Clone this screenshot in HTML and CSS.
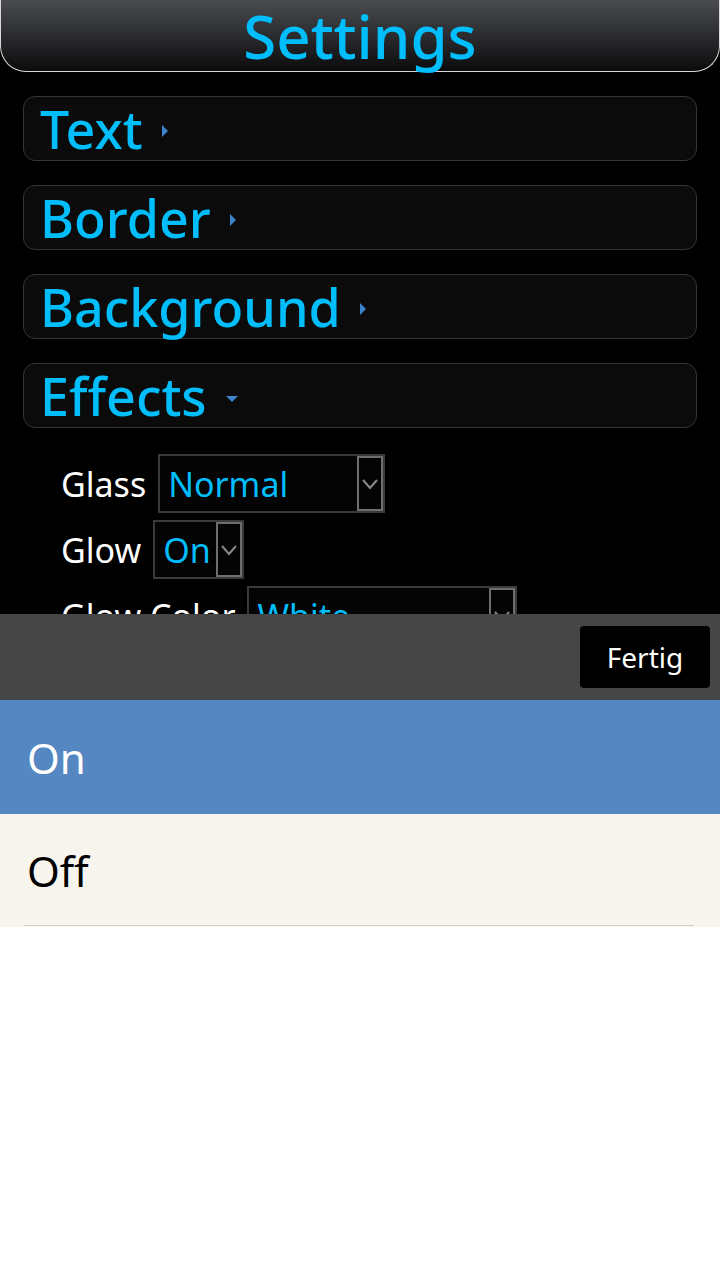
FILE: index.html
```html
<!DOCTYPE html>
<html lang="en">
<head>
    <meta charset="UTF-8">
    <meta name="viewport" content="width=device-width, initial-scale=1.0">
    <title>Settings</title>
    <link rel="stylesheet" href="styles.css">
</head>
<body>

    <div id="app">
        <header class="title-bar">
            <h1>Settings</h1>
        </header>

        <div class="section">
            <span class="section-name">Text</span>
            <span class="arrow arrow-right"></span>
        </div>
        <div class="section">
            <span class="section-name">Border</span>
            <span class="arrow arrow-right"></span>
        </div>
        <div class="section">
            <span class="section-name">Background</span>
            <span class="arrow arrow-right"></span>
        </div>
        <div class="section">
            <span class="section-name">Effects</span>
            <span class="arrow arrow-down"></span>
        </div>

        <div class="options">
            <div class="option-row">
                <span class="option-label">Glass</span>
                <div class="select select-glass">
                    <span class="select-value">Normal</span>
                    <span class="select-btn"><svg width="18" height="12" viewBox="0 0 18 12"><path d="M2 2 L9 10 L16 2" fill="none" stroke="#8a8a8a" stroke-width="2"/></svg></span>
                </div>
            </div>
            <div class="option-row">
                <span class="option-label">Glow</span>
                <div class="select select-glow">
                    <span class="select-value">On</span>
                    <span class="select-btn"><svg width="18" height="12" viewBox="0 0 18 12"><path d="M2 2 L9 10 L16 2" fill="none" stroke="#8a8a8a" stroke-width="2"/></svg></span>
                </div>
            </div>
            <div class="option-row">
                <span class="option-label">Glow Color</span>
                <div class="select select-color">
                    <span class="select-value">White</span>
                    <span class="select-btn"><svg width="18" height="12" viewBox="0 0 18 12"><path d="M2 2 L9 10 L16 2" fill="none" stroke="#8a8a8a" stroke-width="2"/></svg></span>
                </div>
            </div>
        </div>
    </div>

    <div id="picker">
        <div class="picker-bar">
            <button class="done-btn">Fertig</button>
        </div>
        <ul class="picker-list">
            <li class="picker-item selected">On</li>
            <li class="picker-item last">Off</li>
        </ul>
    </div>

</body>
</html>
```

FILE: styles.css
```css
body {
    margin: 0;
    padding: 0;
    background-color: #fff;
    font-family: "Noto Sans", "Open Sans", sans-serif;
}
#app {
    background-color: #000;
    height: 614px;
    overflow: hidden;
}
.title-bar {
    height: 72px;
    box-sizing: border-box;
    background: linear-gradient(to bottom, #4a4c51, #0b0b0c);
    border: 1px solid #d8d8d8;
    border-top: none;
    border-radius: 0 0 26px 26px;
    display: flex;
    justify-content: center;
    align-items: flex-start;
}
.title-bar h1 {
    margin: 0;
    color: #00bdfb;
    font-size: 60px;
    font-weight: 500;
    line-height: 76px;
    margin-top: -2px;
}
.section {
    margin: 24px 23px 0 23px;
    height: 65px;
    box-sizing: border-box;
    background-color: #0b0b0b;
    border: 1px solid #353535;
    border-radius: 12px;
    display: flex;
    align-items: center;
    padding-left: 16px;
    gap: 19px;
}
.section-name {
    color: #00bdfb;
    font-size: 52px;
    font-weight: 500;
    line-height: 60px;
    margin-top: 0;
}
.arrow {
    width: 0;
    height: 0;
    margin-top: 4px;
}
.arrow-right {
    border-top: 6px solid transparent;
    border-bottom: 6px solid transparent;
    border-left: 6px solid #3b84cc;
}
.arrow-down {
    border-left: 6px solid transparent;
    border-right: 6px solid transparent;
    border-top: 6px solid #3b84cc;
    margin-top: 6px;
}
.options {
    margin-top: 26px;
    padding-left: 61px;
    display: flex;
    flex-direction: column;
    gap: 7px;
}
.option-row {
    display: flex;
    align-items: center;
    gap: 12px;
}
.option-label {
    color: #fff;
    font-size: 34px;
}
.select {
    height: 59px;
    box-sizing: border-box;
    border: 2px solid #3a3a3a;
    background-color: #040404;
    display: flex;
    align-items: center;
    justify-content: space-between;
    padding-left: 8px;
}
.select-glass {
    width: 227px;
}
.select-glow {
    width: 91px;
}
.select-color {
    width: 270px;
}
.select-value {
    color: #00bdfb;
    font-size: 34px;
}
.select-btn {
    width: 26px;
    height: 55px;
    box-sizing: border-box;
    border: 2px solid #6e6e6e;
    display: flex;
    align-items: center;
    justify-content: center;
    flex-shrink: 0;
}
.select-btn svg {
    width: 18px;
    height: 12px;
    flex-shrink: 0;
}
.picker-bar {
    height: 86px;
    background-color: #464646;
    display: flex;
    justify-content: flex-end;
    align-items: center;
    padding-right: 10px;
}
.done-btn {
    width: 130px;
    height: 62px;
    background-color: #000;
    color: #fff;
    border: none;
    border-radius: 4px;
    font-family: "Noto Sans", "Open Sans", sans-serif;
    font-size: 28px;
    cursor: pointer;
}
.picker-list {
    list-style: none;
    margin: 0;
    padding: 0;
}
.picker-item {
    height: 113px;
    box-sizing: border-box;
    background-color: #f8f5ef;
    color: #000;
    font-size: 42px;
    padding-left: 27px;
    display: flex;
    align-items: center;
    position: relative;
}
.picker-item.last::after {
    content: "";
    position: absolute;
    left: 24px;
    right: 26px;
    bottom: 1px;
    border-bottom: 1px solid #d2d0cb;
}
.picker-item.selected {
    background-color: #5587c2;
    color: #fff;
    height: 114px;
}
```
